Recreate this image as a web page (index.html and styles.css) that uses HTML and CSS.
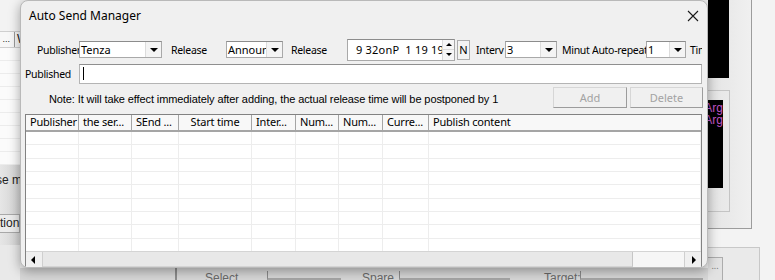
FILE: index.html
```html
<!DOCTYPE html>
<html lang="en">
<head>
    <meta charset="UTF-8">
    <meta name="viewport" content="width=device-width, initial-scale=1.0">
    <title>Auto Send Manager</title>

    <link rel="stylesheet" href="styles.css">
</head>
<body>

    <div class="desk">

        <!-- what shows of the main window on the left -->
        <aside class="back-left">
            <div class="bl-top"></div>
            <div class="bl-head"><span class="bl-cell">...</span><span class="bl-cell2">W</span></div>
            <div class="bl-list"></div>
            <div class="bl-btns">
                <div class="bl-text">se m</div>
                <div class="bl-tion">tion</div>
            </div>
            <div class="bl-foot"></div>
        </aside>

        <div class="mid">
            <div class="dlg">
                <div class="dlg-title">
                    <span>Auto Send Manager</span>
                    <svg class="close" width="12" height="12" viewBox="0 0 12 12">
                        <path d="M1 1 L11 11 M11 1 L1 11" stroke="#1a1a1a" stroke-width="1.1" fill="none"/>
                    </svg>
                </div>

                <div class="dlg-body">
                    <div class="row row-opts">
                        <label class="lbl w-pub">Publisher</label>
                        <div class="combo w-tenza"><span class="combo-val">Tenza</span><span class="combo-btn"><i class="tri-down"></i></span></div>
                        <label class="lbl w-rel">Release</label>
                        <div class="combo w-ann"><span class="combo-val">Announ</span><span class="combo-btn"><i class="tri-down"></i></span></div>
                        <label class="lbl w-rel2">Release</label>
                        <div class="datebox">
                            <span class="date-val">9 32onP&nbsp; 1 19 19</span>
                            <span class="spin">
                                <span class="spin-up"><i class="tri-up-s"></i></span>
                                <span class="spin-dn"><i class="tri-down-s"></i></span>
                            </span>
                        </div>
                        <button class="btn-n">N</button>
                        <label class="lbl w-int">Interv</label>
                        <div class="combo w-three"><span class="combo-val">3</span><span class="combo-btn"><i class="tri-down"></i></span></div>
                        <label class="lbl w-min">Minut</label>
                        <label class="lbl w-auto">Auto-repeat</label>
                        <div class="combo w-one"><span class="combo-val">1</span><span class="combo-btn"><i class="tri-down"></i></span></div>
                        <label class="lbl w-tir">Times</label>
                    </div>

                    <div class="row row-pub">
                        <label class="lbl w-published">Published</label>
                        <div class="textbox"><span class="caret"></span></div>
                    </div>

                    <div class="row row-note">
                        <span class="note">Note: It will take effect immediately after adding, the actual release time will be postponed by 1</span>
                        <button class="btn" disabled>Add</button>
                        <button class="btn btn-del" disabled>Delete</button>
                    </div>

                    <div class="list">
                        <div class="cols list-head">
                            <span>Publisher</span>
                            <span>the ser...</span>
                            <span>SEnd ...</span>
                            <span class="center">Start time</span>
                            <span>Inter...</span>
                            <span>Num...</span>
                            <span>Num...</span>
                            <span>Curre...</span>
                            <span>Publish content</span>
                        </div>
                        <div class="cols list-body">
                            <span></span><span></span><span></span><span></span><span></span>
                            <span></span><span></span><span></span><span></span>
                        </div>
                        <div class="hscroll">
                            <span class="sb-btn sb-left"><i class="tri-left"></i></span>
                            <span class="sb-thumb"></span>
                            <span class="sb-track"></span>
                            <span class="sb-btn sb-right"><i class="tri-right"></i></span>
                        </div>
                    </div>
                </div>
            </div>

            <!-- bottom edge of the main window under the dialog -->
            <div class="back-bottom">
                <span class="bb-gap"></span>
                <span class="bb-lbl w-sel">Select</span>
                <span class="bb-combo w-c1"></span>
                <span class="bb-lbl w-spare">Spare</span>
                <span class="bb-combo w-c2"></span>
                <span class="bb-lbl w-target">Target:</span>
                <span class="bb-combo w-c3"></span>
            </div>
        </div>

        <!-- what shows of the main window on the right -->
        <aside class="back-right">
            <div class="br-frame">
                <div class="br-black"></div>
                <div class="br-box">
                    <div class="br-console">
                        <div>Arg</div>
                        <div>Arg</div>
                    </div>
                </div>
            </div>
            <div class="br-bottom">
                <span class="br-dots">...</span>
            </div>
        </aside>

    </div>

</body>
</html>
```

FILE: styles.css
```css
* {
  box-sizing: border-box;
}

html,
body {
  margin: 0;
  height: 100%;
  overflow: hidden;
}

body {
  background-color: #f0f0f0;
  font-family: "Noto Sans", "Open Sans", sans-serif;
  font-size: 10.5px;
  color: #000;
}

.desk {
  display: flex;
  width: 775px;
  height: 280px;
}

/* ---------- main window, left part ---------- */

.back-left {
  width: 20px;
  flex: none;
  display: flex;
  flex-direction: column;
  overflow: hidden;
  background: #f3f3f3;
  font-family: "Liberation Sans", sans-serif;
  font-size: 12px;
  color: #222;
}

.bl-top {
  height: 31px;
}

.bl-head {
  display: flex;
  height: 17px;
  border-top: 1px solid #cfcfcf;
  border-bottom: 1px solid #cfcfcf;
  background: #f7f7f7;
  line-height: 15px;
}

.bl-cell {
  width: 15px;
  flex: none;
  text-align: right;
  border-right: 1px solid #9a9a9a;
  overflow: hidden;
  padding-right: 4px;
  font-size: 9px;
}

.bl-cell2 {
  padding-left: 2px;
}

.bl-list {
  height: 117px;
  background: repeating-linear-gradient(to bottom, #fbfbfb 0 12px, #ececec 12px 13px);
}

.bl-btns {
  height: 80px;
  background: linear-gradient(to right, #e6e6e6, #d2d2d2);
  padding-top: 7px;
}

.bl-text {
  margin-left: -4px;
  height: 16px;
  line-height: 16px;
  white-space: nowrap;
}

.bl-tion {
  margin-top: 26px;
  height: 19px;
  line-height: 17px;
  border: 1px solid #a8a8a8;
  border-left: none;
  background: #ececec;
  text-align: right;
  padding-right: 2px;
}

.bl-foot {
  flex: 1;
  background: #e9e9e9;
}

/* ---------- middle column ---------- */

.mid {
  width: 688px;
  flex: none;
  display: flex;
  flex-direction: column;
}

.dlg {
  position: relative;
  z-index: 2;
  height: 268px;
  flex: none;
  background: #f0f0f0;
  border: 1px solid #b9b9b9;
  border-radius: 8px;
  box-shadow: 0 3px 12px rgba(0, 0, 0, 0.35);
  overflow: hidden;
}

.dlg-title {
  height: 27px;
  display: flex;
  align-items: center;
  justify-content: space-between;
  padding: 2px 8px 0 8px;
  font-size: 12px;
}

.dlg-body {
  padding: 0 5px 0 4px;
}

.row {
  display: flex;
  align-items: center;
}

.lbl {
  flex: none;
  white-space: nowrap;
  overflow: hidden;
  letter-spacing: -0.3px;
}

/* first row: widths follow the dialog's own layout */
.row-opts {
  margin-top: 10px;
  height: 23px;
}

.w-pub { width: 54px; padding-left: 12px; }
.w-rel { width: 64px; padding-left: 9px; }
.w-rel2 { width: 64px; padding-left: 8px; }
.w-int { width: 35px; padding-left: 6px; }
.w-min { width: 35px; padding-left: 5px; }
.w-auto { width: 54px; }
.w-tir { width: 16px; padding-left: 4px; }
.w-published { width: 54px; }

.combo {
  flex: none;
  display: flex;
  height: 17px;
  background: #fff;
  border: 1px solid #a9a9a9;
  border-top-color: #8c8c8c;
}

.w-tenza { width: 83px; }
.w-ann { width: 57px; }
.w-three { width: 52px; }
.w-one { width: 40px; }

.combo-val {
  flex: 1;
  overflow: hidden;
  white-space: nowrap;
  padding-left: 1px;
  line-height: 15px;
  font-size: 11px;
}

.combo-btn {
  width: 16px;
  flex: none;
  display: flex;
  align-items: center;
  justify-content: center;
  background: #f4f4f4;
  border-left: 1px solid #dcdcdc;
}

.tri-down {
  border-left: 4px solid transparent;
  border-right: 4px solid transparent;
  border-top: 4px solid #000;
}

.datebox {
  flex: none;
  width: 108px;
  height: 22px;
  display: flex;
  align-items: center;
  background: #fff;
  border: 1px solid #a9a9a9;
  border-top-color: #8c8c8c;
}

.date-val {
  flex: 1;
  padding-left: 8px;
  white-space: nowrap;
  overflow: hidden;
  font-size: 11px;
  letter-spacing: 0.2px;
}

.spin {
  width: 12px;
  flex: none;
  height: 20px;
  display: flex;
  flex-direction: column;
}

.spin-up,
.spin-dn {
  flex: 1;
  display: flex;
  align-items: center;
  justify-content: center;
  background: #f6f6f6;
  border-left: 1px solid #dadada;
}

.spin-up {
  border-bottom: 1px solid #dadada;
}

.tri-up-s {
  border-left: 3px solid transparent;
  border-right: 3px solid transparent;
  border-bottom: 3px solid #000;
}

.tri-down-s {
  border-left: 3px solid transparent;
  border-right: 3px solid transparent;
  border-top: 3px solid #000;
}

.btn-n {
  flex: none;
  margin-left: 2px;
  width: 13px;
  height: 20px;
  padding: 0;
  font: inherit;
  font-size: 11px;
  background: #f3f3f3;
  border: 1px solid #adadad;
}

/* second row */
.row-pub {
  margin-top: 3px;
  height: 20px;
}

.textbox {
  flex: 1;
  height: 20px;
  background: #fff;
  border: 1px solid #b4b4b4;
  border-top-color: #8f8f8f;
  padding: 2px 3px;
}

.caret {
  display: block;
  width: 1px;
  height: 13px;
  background: #000;
}

/* third row */
.row-note {
  margin-top: 3px;
  height: 21px;
}

.note {
  flex: 1;
  padding-left: 24px;
  white-space: nowrap;
  overflow: hidden;
  font-family: "Liberation Sans", sans-serif;
  font-size: 11px;
  letter-spacing: -0.1px;
  padding-top: 2px;
}

.btn {
  flex: none;
  width: 74px;
  height: 21px;
  margin-left: 3px;
  padding: 0;
  font: inherit;
  font-size: 11px;
  color: #a3a3a3;
  background: #f0f0f0;
  border: 1px solid #d6d6d6;
  border-right-color: #9c9c9c;
  border-bottom-color: #9c9c9c;
}

.btn-del {
  width: 73px;
  margin-right: -1px;
}

/* ---------- list ---------- */

.list {
  margin-top: 6px;
  height: 160px;
  display: flex;
  flex-direction: column;
  border: 1px solid #828282;
  background: #fff;
}

.cols {
  display: grid;
  grid-template-columns: 53px 53px 47px 73px 44px 43px 44px 46px 1fr;
}

.list-head {
  height: 17px;
  flex: none;
  background: #f8f8f8;
  border-bottom: 2px solid #a5a5a5;
  line-height: 14px;
  font-size: 11px;
}

.list-head span {
  border-right: 1px solid #a5a5a5;
  padding-left: 4px;
  white-space: nowrap;
  overflow: hidden;
  letter-spacing: -0.2px;
}

.list-head span:last-child {
  border-right: none;
}

.list-head .center {
  text-align: center;
  padding-left: 0;
}

.list-body {
  height: 119px;
  flex: none;
  background: repeating-linear-gradient(to bottom, #fff 0 12.33px, #ededed 12.33px 13.33px);
}

.list-body span {
  border-right: 1px solid #ededed;
}

.hscroll {
  height: 16px;
  flex: none;
  display: flex;
  background: #f0f0f0;
  border-top: 1px solid #d4d4d4;
}

.sb-btn {
  width: 17px;
  flex: none;
  display: flex;
  align-items: center;
  justify-content: center;
  background: #f0f0f0;
}

.sb-left {
  border-right: 1px solid #cfcfcf;
}

.sb-right {
  border-left: 1px solid #cfcfcf;
}

.sb-thumb {
  width: 590px;
  flex: none;
  background: #e8e8e8;
  border-right: 1px solid #c6c6c6;
  border-bottom: 1px solid #d4d4d4;
}

.sb-track {
  flex: 1;
  background: #f6f6f6;
}

.tri-left {
  border-top: 4px solid transparent;
  border-bottom: 4px solid transparent;
  border-right: 4px solid #000;
  margin-right: 3px;
}

.tri-right {
  border-top: 4px solid transparent;
  border-bottom: 4px solid transparent;
  border-left: 4px solid #000;
  margin-left: 2px;
}

/* ---------- main window, bottom part ---------- */

.back-bottom {
  flex: 1;
  display: flex;
  align-items: flex-start;
  overflow: hidden;
  background: #d7d7d7;
  font-family: "Liberation Sans", sans-serif;
  font-size: 12px;
  color: #6a6a6a;
}

.bb-gap {
  width: 157px;
  height: 12px;
  flex: none;
  border-right: 2px solid #8d8d8d;
}

.bb-lbl {
  flex: none;
  padding-left: 28px;
  margin-top: 3px;
  line-height: 14px;
}

.w-sel { width: 90px; }
.w-spare { width: 58px; padding-left: 21px; }
.w-target { width: 70px; padding-left: 34px; }

.bb-combo {
  flex: none;
  height: 9px;
  margin-top: 3px;
  border-left: 1px solid #8a8a8a;
  border-bottom: 2px solid #a6a6a6;
}

.w-c1 { width: 74px; }
.w-c2 { width: 111px; }
.w-c3 { width: 123px; }

/* ---------- main window, right part ---------- */

.back-right {
  flex: 1;
  display: flex;
  flex-direction: column;
  background: #f3f3f3;
  overflow: hidden;
}

.br-frame {
  width: 44px;
  height: 229px;
  flex: none;
  background: linear-gradient(to right, #e4e4e4, #f0f0f0);
  border-right: 1px solid #9c9c9c;
  border-bottom: 1px solid #9c9c9c;
}

.br-black {
  width: 21px;
  height: 78px;
  background: #000;
}

.br-box {
  margin-top: 12px;
  width: 22px;
  height: 122px;
  border: 1px solid #c4c4c4;
  border-left: none;
  padding-top: 9px;
}

.br-console {
  width: 15px;
  height: 88px;
  background: #000;
  color: #c255c8;
  font-family: "Liberation Sans", sans-serif;
  font-size: 12px;
  line-height: 12px;
  padding-top: 2px;
  text-align: right;
  overflow: hidden;
}

.br-console div {
  white-space: nowrap;
  direction: rtl;
}

.br-bottom {
  margin-top: 18px;
  width: 52px;
  flex: 1;
  border-top: 1px solid #c8c8c8;
  border-right: 1px solid #c8c8c8;
  background: #eaeaea;
  padding-top: 9px;
}

.br-dots {
  display: block;
  width: 15px;
  height: 24px;
  background: #e2e2e2;
  border: 1px solid #acacac;
  border-left: none;
  color: #777;
  font-size: 9px;
  line-height: 16px;
  text-align: center;
}
```
